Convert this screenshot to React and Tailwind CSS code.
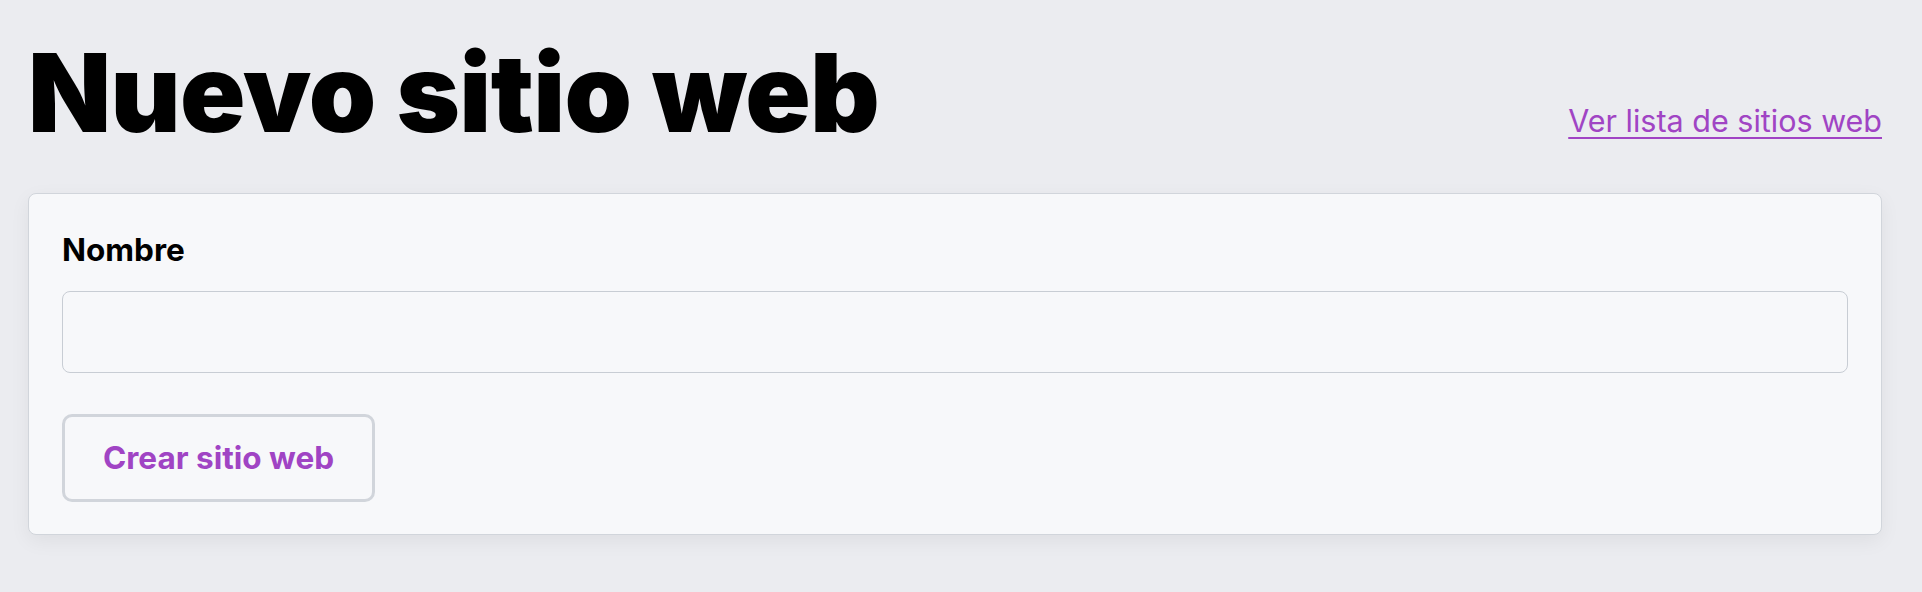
export default function App() {
  return (
    <div
      className="min-h-[592px] bg-[#ebecf0] pl-[28px] pr-[40px] pt-[39px] pb-10"
      style={{ fontFamily: 'Inter, "Noto Sans", sans-serif' }}
    >
      <div className="flex items-baseline justify-between">
        <h1 className="text-[108px] leading-none font-black tracking-[-0.006em] text-black">
          Nuevo sitio web
        </h1>
        <a href="#" className="text-[30.5px] text-[#a044c4] underline decoration-2 underline-offset-[5px]">
          Ver lista de sitios web
        </a>
      </div>

      <div className="mt-[46px] rounded-lg border border-[#d1d5db] bg-[#f7f8fa] px-[33px] pt-[33px] pb-[32px] shadow-[0_6px_20px_rgba(0,0,0,0.06)]">
        <label className="block text-[31.5px] leading-[45px] font-bold text-black">Nombre</label>
        <input
          type="text"
          className="mt-[19px] block h-[82px] w-full rounded-lg border-[1.5px] border-[#c8cdd4] bg-[#f7f8fa] px-4 text-[30px] outline-none"
        />
        <button className="mt-[41px] h-[88px] rounded-[10px] border-[3px] border-[#d1d5db] bg-[#f7f8fa] px-[38px] text-[31.5px] font-bold text-[#a044c4]">
          Crear sitio web
        </button>
      </div>
    </div>
  )
}
